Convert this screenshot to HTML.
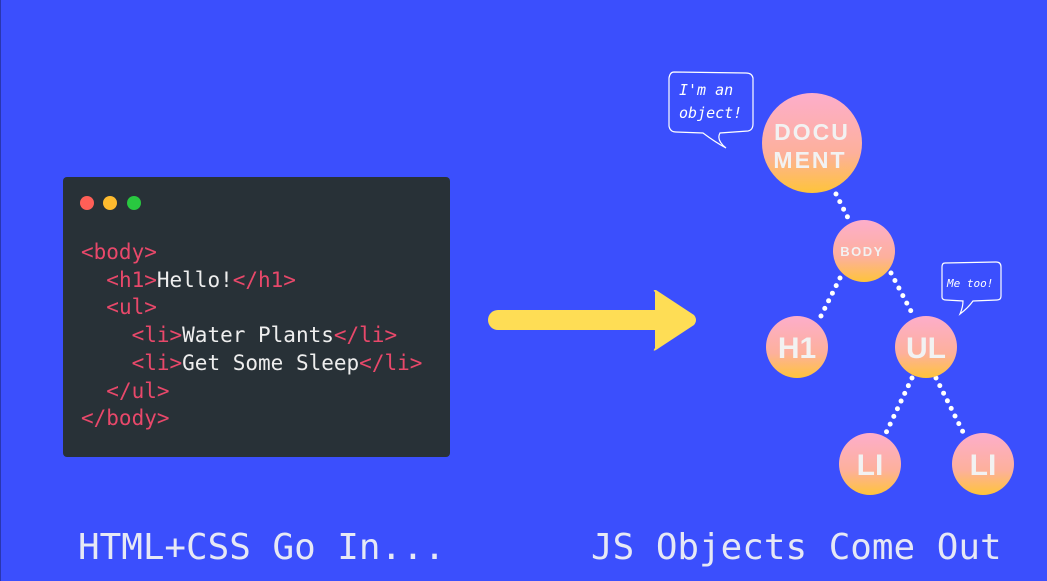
<!DOCTYPE html>
<html><head><style>
body{margin:0;width:1047px;height:581px;background:#3b4ffd;overflow:hidden;position:relative;font-family:"DejaVu Sans Mono","Liberation Mono",monospace}
.win{position:absolute;left:63px;top:177px;width:387px;height:280px;background:#283137;border-radius:4px}
.dot{position:absolute;top:19px;width:14px;height:14px;border-radius:50%}
pre{position:absolute;left:18px;top:62px;margin:0;font-family:"DejaVu Sans Mono",monospace;font-size:21px;line-height:27.7px;color:#eee}
.t{color:#e8486a}
.cap{position:absolute;top:527px;font-size:35.9px;color:#e6e8f5;font-weight:300;white-space:pre}
</style></head><body>
<div class="win">
<div class="dot" style="left:17px;background:#fe5f57"></div>
<div class="dot" style="left:40px;background:#febb2e"></div>
<div class="dot" style="left:64px;background:#29c840"></div>
<pre><span class="t">&lt;body&gt;</span>
  <span class="t">&lt;h1&gt;</span>Hello!<span class="t">&lt;/h1&gt;</span>
  <span class="t">&lt;ul&gt;</span>
    <span class="t">&lt;li&gt;</span>Water Plants<span class="t">&lt;/li&gt;</span>
    <span class="t">&lt;li&gt;</span>Get Some Sleep<span class="t">&lt;/li&gt;</span>
  <span class="t">&lt;/ul&gt;</span>
<span class="t">&lt;/body&gt;</span></pre>
</div>
<div class="cap" style="left:78px">HTML+CSS Go In...</div>
<div class="cap" style="left:591px">JS Objects Come Out</div>
<svg width="1047" height="581" style="position:absolute;left:0;top:0">
<defs><linearGradient id="g" x1="0" y1="0" x2="0" y2="1"><stop offset="0" stop-color="#fdaecb"/><stop offset="0.6" stop-color="#fdb09c"/><stop offset="1" stop-color="#fec43a"/></linearGradient></defs>
<line x1="0.5" y1="0" x2="0.5" y2="581" stroke="#2a36b0" stroke-width="1"/>
<line x1="498" y1="320" x2="660" y2="320" stroke="#fedd55" stroke-width="20" stroke-linecap="round"/>
<path d="M655 292 Q652 290 656 290 L694 315 Q698 320 694 325 L656 350 Q652 352 655 348 Z" fill="#fedd55"/>
<g stroke="#fff" stroke-width="5" stroke-linecap="round" stroke-dasharray="0 8.5" fill="none">
<line x1="836" y1="194" x2="849" y2="220"/>
<line x1="840" y1="278" x2="820" y2="318"/>
<line x1="891" y1="273" x2="913" y2="315"/>
<line x1="912" y1="378" x2="885" y2="435"/>
<line x1="936" y1="378" x2="965" y2="436"/>
</g>
<g fill="url(#g)">
<circle cx="812" cy="143" r="50"/>
<circle cx="864" cy="251" r="31"/>
<circle cx="797" cy="347" r="31"/>
<circle cx="926" cy="347" r="31"/>
<circle cx="870" cy="464" r="31"/>
<circle cx="983" cy="464" r="31"/>
</g>
<g fill="#f2f2f2" font-family="Liberation Sans,sans-serif" font-weight="bold" text-anchor="middle">
<text x="812" y="140" font-size="23" letter-spacing="2">DOCU</text>
<text x="810" y="168" font-size="23" letter-spacing="2">MENT</text>
<text x="862" y="256" font-size="13" letter-spacing="1.5">BODY</text>
<text x="797" y="358" font-size="30">H1</text>
<text x="926" y="358" font-size="30">UL</text>
<text x="870" y="475" font-size="30">LI</text>
<text x="983" y="475" font-size="30">LI</text>
</g>
<g fill="none" stroke="#fff" stroke-width="1.2">
<path d="M674 72 Q670 72 669 78 L669 126 Q670 132 676 132 L703 133 Q715 142 726 148 Q716 140 720 133 L748 131 Q753 130 753 124 L753 78 Q752 73 746 73 Z"/>
<path d="M945 263 Q942 263 942 267 L942 297 Q942 300 946 300 L963 301 Q963 307 960 314 Q968 308 973 301 L997 300 Q1001 300 1001 296 L1001 267 Q1001 262 996 262 Z"/>
</g>
<g fill="#fff" font-family="DejaVu Sans Mono,monospace" font-style="italic">
<text x="679" y="95" font-size="15">I'm an</text>
<text x="679" y="118" font-size="15">object!</text>
<text x="947" y="287" font-size="11">Me too!</text>
</g>
</svg>
</body></html>
